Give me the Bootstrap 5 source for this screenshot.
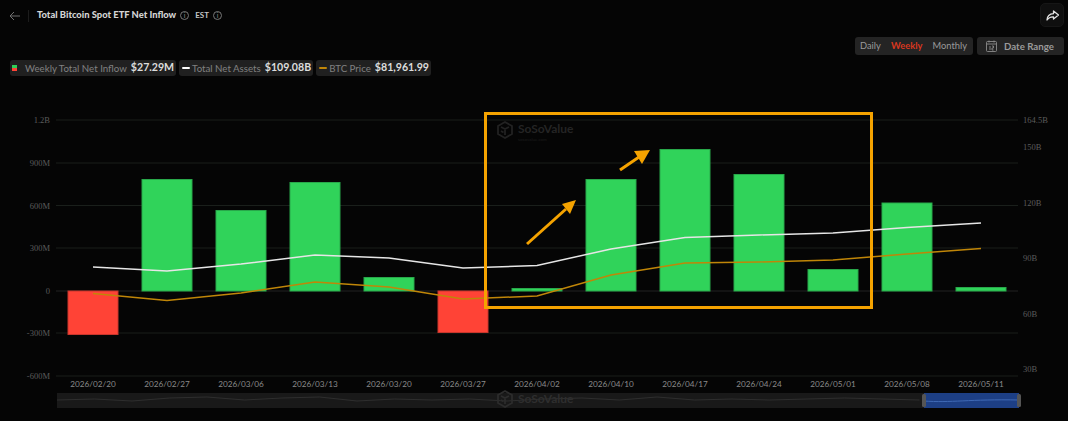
<!DOCTYPE html>
<html lang="en">
<head>
    <meta charset="UTF-8">
    <meta name="viewport" content="width=device-width, initial-scale=1.0">
    <title>Total Bitcoin Spot ETF Net Inflow</title>
    <link href="https://cdn.jsdelivr.net/npm/bootstrap@5.3.0/dist/css/bootstrap.min.css" rel="stylesheet">
    <style>
        body {
            background: #050505;
            color: #d8d8d8;
            font-family: Lato, "Liberation Sans", sans-serif;
            overflow: hidden;
        }
        .top-bar {
            height: 30px;
            padding: 3px 4px 0 9px;
        }
        .back-link {
            padding-right: 8px;
            margin-right: 8px;
            border-right: 1px solid #1c1c1c;
            height: 12px;
            margin-top: 1px;
        }
        .page-title {
            font-size: 9.4px;
            font-weight: 900;
            color: #d4d4d4;
            margin: 0;
            line-height: 1;
        }
        .est-text {
            font-size: 8px;
            font-weight: 700;
            color: #c4c4c4;
            margin-left: 6px;
        }
        .info-dot {
            width: 9px;
            height: 9px;
            border: 1px solid #777;
            border-radius: 50%;
            color: #888;
            font-size: 7px;
            line-height: 7px;
            text-align: center;
        }
        .share-btn {
            width: 24px;
            height: 24px;
            background: #0f0f0f;
            border: 1px solid #161616;
            border-radius: 5px;
        }
        .tool-row {
            height: 18px;
            margin-top: 7px;
            padding-right: 4px;
        }
        .range-tabs, .date-btn {
            background: #242424;
            border-radius: 3px;
            height: 18px;
            color: #9a9a9a;
        }
        .range-tabs {
            width: 118px;
            padding: 0 6px 0 5px;
            font-size: 9.3px;
        }
        .range-tabs .on {
            color: #d8371f;
            font-weight: 700;
        }
        .date-btn {
            width: 87px;
            padding-left: 9px;
            font-weight: 700;
            font-size: 9.7px;
            gap: 7px;
        }
        .legend-row {
            height: 16px;
            margin-top: 5px;
            padding-left: 10px;
            gap: 3px;
        }
        .legend-pill {
            background: #202020;
            border-radius: 3px;
            padding: 0 2px;
            height: 16px;
            font-size: 9.7px;
            color: #808080;
            gap: 2px;
            white-space: nowrap;
        }
        .legend-pill b {
            color: #dcdcdc;
            font-size: 10.6px;
            font-weight: 700;
            margin-left: 2px;
        }
        .swatch-split {
            width: 5px;
            height: 6px;
            background: linear-gradient(#2ed158 50%, #ff4336 50%);
            margin-right: 6px;
        }
        .swatch-line {
            width: 8px;
            height: 2px;
            border-radius: 1px;
            margin-left: 1px;
        }
        .chart-svg {
            display: block;
        }
        .axis-text {
            font-family: "Liberation Serif", serif;
            font-size: 8.5px;
            fill: #5c5c5c;
        }
        .date-text {
            font-family: Lato, sans-serif;
            font-size: 8.2px;
            fill: #8a8a8a;
        }
        .mark-name {
            font-family: Lato, sans-serif;
            font-weight: 700;
            font-size: 12px;
        }
    </style>
</head>
<body>
    <!-- header -->
    <div class="top-bar d-flex align-items-start">
        <div class="d-flex align-items-center" style="height:24px">
            <div class="back-link d-flex align-items-center">
                <svg width="11" height="10" viewBox="0 0 11 10" fill="none" stroke="#6f6f6f" stroke-width="1"><path d="M11 5H1M5 1L1 5l4 4"/></svg>
            </div>
            <h1 class="page-title">Total Bitcoin Spot ETF Net Inflow</h1>
            <span class="info-dot ms-1">i</span>
            <span class="est-text">EST</span>
            <span class="info-dot ms-1">i</span>
        </div>
        <button class="share-btn ms-auto d-flex align-items-center justify-content-center p-0">
            <svg width="13" height="11" viewBox="0 0 13 11" fill="none" stroke="#e2e2e2" stroke-width="1.3" stroke-linejoin="round"><path d="M7.5 1l5 4-5 4V6.8C4.5 6.6 2.5 7.6 1 10c.2-3.600 2.500-6 6.500-6.300z"/></svg>
        </button>
    </div>

    <div class="tool-row d-flex justify-content-end gap-1">
        <div class="range-tabs d-flex align-items-center justify-content-between">
            <span>Daily</span><span class="on">Weekly</span><span>Monthly</span>
        </div>
        <div class="date-btn d-flex align-items-center">
            <svg width="11" height="12" viewBox="0 0 11 12" fill="none" stroke="#8c8c8c" stroke-width="0.9"><rect x="0.500" y="1.500" width="10" height="10" rx="1"/><path d="M0.500 4h10M3 0.500v2M8 0.500v2M4 6v4M6 6h1.500v2H6v2h1.500"/></svg>
            <span>Date Range</span>
        </div>
    </div>

    <div class="legend-row d-flex">
        <div class="legend-pill d-flex align-items-center"><span class="swatch-split"></span>Weekly Total Net Inflow <b>$27.29M</b></div>
        <div class="legend-pill d-flex align-items-center"><span class="swatch-line bg-white"></span>Total Net Assets <b>$109.08B</b></div>
        <div class="legend-pill d-flex align-items-center"><span class="swatch-line" id="btcSwatch"></span>BTC Price <b>$81,961.99</b></div>
    </div>

    <svg class="chart-svg" id="chart" width="1068" height="345" viewBox="0 76 1068 345"></svg>

    <script>
        // chart data, read off the axis in pixels
        const ORANGE = '#c08608';
        const zeroY = 291;
        const dates = ['2026/02/20','2026/02/27','2026/03/06','2026/03/13','2026/03/20','2026/03/27','2026/04/02','2026/04/10','2026/04/17','2026/04/24','2026/05/01','2026/05/08','2026/05/11'];
        const barY = [335, 179, 210, 182, 277, 333, 288, 179, 149, 174, 269, 202.5, 287];
        const assetsY = [267, 271, 264, 255, 258, 268, 265.5, 249, 237.5, 235, 233, 227.5, 223];
        const priceY = [293.5, 300.5, 293, 282, 287, 299, 296, 275, 263, 262, 260, 254, 248.5];
        const grid = [[120,'1.2B'],[163,'900M'],[205.5,'600M'],[248,'300M'],[291,'0'],[333,'-300M'],[376,'-600M']];
        const rightAxis = [[120,'164.5B'],[147,'150B'],[202.500,'120B'],[258,'90B'],[314,'60B'],[369,'30B']];
        const cx = i => 93 + i * 74;

        function logoMark(x, y, s, color) {
            return `<path transform="translate(${x} ${y}) scale(${s})" d="M7 0l7 4v8l-7 4-7-4V4zM3 5l4 2 4-2M7 7v6M3 9l2.500 1.500" fill="none" stroke="${color}" stroke-width="1.800"/>`;
        }

        let svg = '';
        grid.forEach(([y, label]) => {
            svg += `<line x1="56" x2="1018" y1="${y}" y2="${y}" stroke="${y === zeroY ? '#222' : '#1a1f1b'}"/>`;
            svg += `<text class="axis-text" x="50" y="${y + 3}" text-anchor="end">${label}</text>`;
        });
        rightAxis.forEach(([y, label]) => {
            svg += `<text class="axis-text" x="1023" y="${y + 3}">${label}</text>`;
        });

        // watermark
        svg += logoMark(498, 122, 1, '#222');
        svg += `<text class="mark-name" x="518" y="133" fill="#242424">SoSoValue</text>`;
        svg += `<text x="518" y="140.500" font-size="4.500" fill="#1c1c1c" font-family="Lato">sosovalue.com</text>`;

        barY.forEach((y, i) => {
            const up = y < zeroY;
            svg += `<rect x="${cx(i) - 25}" y="${up ? y + 0.5 : zeroY}" width="50" height="${Math.abs(y - zeroY) - 0.5}" fill="${up ? '#30d35a' : '#ff4336'}" stroke="${up ? '#28a84a' : '#c8362c'}"/>`;
            svg += `<text class="date-text" x="${cx(i)}" y="387" text-anchor="middle">${dates[i]}</text>`;
        });

        const pts = ys => ys.map((y, i) => `${cx(i)},${y}`).join(' ');
        svg += `<polyline points="${pts(priceY)}" fill="none" stroke="${ORANGE}" stroke-width="1.500"/>`;
        svg += `<polyline points="${pts(assetsY)}" fill="none" stroke="#e6e6e6" stroke-width="1.500"/>`;

        // highlight box and arrows drawn over the chart
        svg += `<rect x="485.500" y="113.500" width="386" height="194" fill="none" stroke="#f5a300" stroke-width="3"/>`;
        svg += `<path d="M527 244L566 209" stroke="#f5a300" stroke-width="3"/><path d="M576 200L562 204L570 214Z" fill="#f5a300"/>`;
        svg += `<path d="M620 170L642 155" stroke="#f5a300" stroke-width="3"/><path d="M650 150L634 151L642 164Z" fill="#f5a300"/>`;

        // data zoom strip
        const wiggle = [400,399,401,398,397,400,398,397,401,399,400,399,401,399,398,400,397,400,399,400,399,398,399,400];
        const stripPts = wiggle.map((y, i) => `${57 + i * 37.500},${y}`).join(' ');
        svg += `<rect x="57" y="393" width="867" height="15" fill="#191919"/>`;
        svg += `<polyline points="${stripPts}" fill="none" stroke="#333" stroke-width="0.800"/>`;
        svg += `<rect x="924" y="393" width="95" height="15" fill="#1d3f85"/>`;
        svg += `<path d="M924 401C950 403 970 399 1019 400" fill="none" stroke="#3f69b5"/>`;
        svg += `<rect x="922" y="394" width="4" height="13" rx="1.500" fill="#555"/><rect x="1017" y="394" width="4" height="13" rx="1.500" fill="#555"/>`;
        svg += logoMark(498, 391, 1, '#2c2c2c');
        svg += `<text class="mark-name" x="518" y="403" fill="#2e2e2e">SoSoValue</text>`;

        document.getElementById('chart').innerHTML = svg;
        document.getElementById('btcSwatch').style.background = ORANGE;
    </script>
    <script src="https://cdn.jsdelivr.net/npm/bootstrap@5.3.0/dist/js/bootstrap.bundle.min.js"></script>
</body>
</html>
